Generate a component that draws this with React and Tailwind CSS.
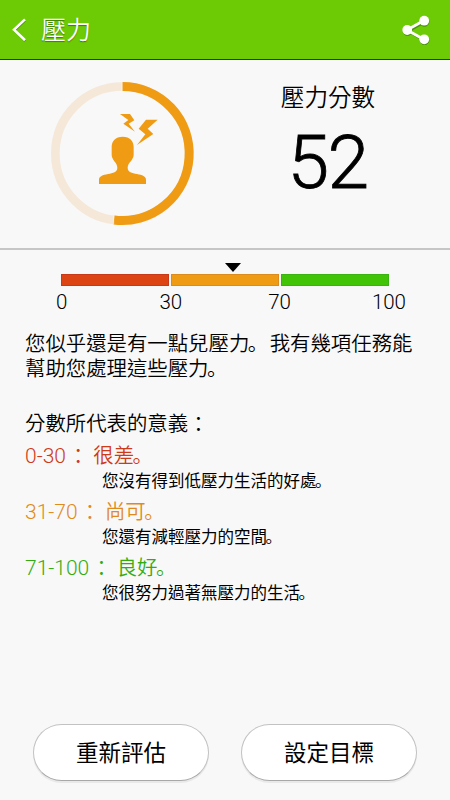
import React from 'react';

const levels = [
    { range: '0-30', label: '很差', text: '您沒有得到低壓力生活的好處', color: 'text-[#cf3a17]' },
    { range: '31-70', label: '尚可', text: '您還有減輕壓力的空間', color: 'text-[#e08a1c]' },
    { range: '71-100', label: '良好', text: '您很努力過著無壓力的生活', color: 'text-[#33ac10]' },
];

// full stop set low and left in its cell
const Stop = () => <span className="inline-block relative -left-[1.500px] leading-none font-['Noto_Sans_CJK_JP',sans-serif]">。</span>;

const Colon = () => <span className="relative top-px">：</span>;

const Header = () => {
    return (
        <header className="h-[60px] shrink-0 bg-[#6ccb05] border-b border-[#24440a] flex items-center justify-between pl-3 pr-5 text-white">
            <div className="flex items-center">
                <svg className="w-[15px] h-6 mr-[14px]" viewBox="0 0 15 24" fill="none">
                    <path d="M13 2.4 2.4 12.6 13 23" stroke="#3f7a08" strokeWidth="2.2" />
                    <path d="M13 1.4 2 11.8 13 22.2" stroke="#fff" strokeWidth="2.6" />
                </svg>
                <h1 className="text-[25px] leading-[30px] pt-[2px] font-[350] [text-shadow:0_1px_1px_#3f7a08]">壓力</h1>
            </div>
            <svg className="w-[28px] h-[30px]" viewBox="0 0 28 30">
                <g fill="#4b920a" stroke="#4b920a" transform="translate(0.3 1)">
                    <path d="M22 6 6 15l16 9.500" fill="none" strokeWidth="2.800" />
                    <circle cx="22.200" cy="5.800" r="4.500" />
                    <circle cx="22.200" cy="24.200" r="4.500" />
                    <circle cx="5.200" cy="15" r="4.500" />
                </g>
                <path d="M22 5.500 5 15l17 9.500" fill="none" stroke="#fff" strokeWidth="2.800" />
                <g fill="#fff">
                    <circle cx="22.200" cy="5.700" r="4.900" />
                    <circle cx="22.200" cy="24.300" r="4.900" />
                    <circle cx="5.200" cy="15" r="4.900" />
                </g>
            </svg>
        </header>
    );
};

const StressRing = () => {
    return (
        <svg className="w-[165px] h-[180px] ml-10 mt-[15px] shrink-0" viewBox="0 0 495 540">
            <circle cx="247" cy="235.500" r="201" fill="none" stroke="#f5e8d9" strokeWidth="26" />
            <path d="M247 34.500A201 201 0 1 1 222 435" fill="none" stroke="#ef9c14" strokeWidth="27" />
            <path d="M246 21v27M221 422v27" stroke="#fff8e8" strokeWidth="2" />
            <g fill="#ef9c14">
                <path d="M248 185c-22 0-33 13-33 31v23c0 16 17 24 17 39 0 13-13 16-28 19-16 3-27 7-27 17v13h141v-13c0-10-11-14-27-17-15-3-28-6-28-19 0-15 18-23 18-39v-23c0-18-11-31-33-31z" />
                <path d="M240 117h30l13 19-17 10 19 24-35-24 15-11z" />
                <path d="M318 134h35l-30 27 17 16-49 33 25-32-20-17z" />
            </g>
        </svg>
    );
};

const Score = () => {
    return (
        <section className="h-[190px] shrink-0 flex items-start border-b-2 border-[#c6c6c6]">
            <StressRing />
            <div className="w-[248px] flex flex-col items-center pt-[23px]">
                <div className="text-[23.600px] leading-[30px] font-[350] pl-px">壓力分數</div>
                <div className="text-[75px] leading-[88px] mt-[5px] font-light tracking-[-1.500px] [-webkit-text-stroke:0.800px_black]">52</div>
            </div>
        </section>
    );
};

const Scale = () => {
    return (
        <section className="shrink-0 pl-[61px] pr-[61px] pt-[13px]">
            <svg className="w-4 h-[9px] ml-[164px]" viewBox="0 0 16 9">
                <path d="M0 0h16L8 9z" />
            </svg>
            <div className="grid grid-cols-3 gap-[2px] mt-[2px] h-3">
                <div className="bg-[#dc4513] border border-[#c83a17]"></div>
                <div className="bg-[#ef9c14] border border-[#dc8c1d]"></div>
                <div className="bg-[#40c405] border border-[#39b310]"></div>
            </div>
            <div className="flex justify-between -ml-[5px] -mr-[17px] mt-[4px] text-[20.500px] leading-6 font-light">
                <span>0</span>
                <span className="ml-[11px]">30</span>
                <span className="ml-[5px]">70</span>
                <span>100</span>
            </div>
        </section>
    );
};

const Level = ({ range, label, text, color }) => {
    return (
        <div className="h-14">
            <div className={`h-8 text-[20.400px] leading-8 font-[350] whitespace-pre ${color}`}>
                <span className="mr-[2px] font-light text-[21px]">{range}</span><Colon /> {label}<Stop />
            </div>
            <div className="ml-[77px] h-5 text-[16.500px] leading-5 whitespace-nowrap">{text}<Stop /></div>
        </div>
    );
};

const Button = ({ children }) => {
    return (
        <button className="w-[176px] h-[57px] rounded-full bg-white border border-[#c2c2c2] border-b-[#a8a8a8] shadow-[0_2px_0_#e9e9e9] text-[22.500px] leading-none pt-[2px]">
            {children}
        </button>
    );
};

const App = () => {
    return (
        <div className="w-[450px] h-[800px] overflow-hidden flex flex-col bg-[#f8f8f8] text-black font-['Roboto','Noto_Sans_CJK_TC',sans-serif]">
            <Header />
            <Score />
            <Scale />
            <main className="flex-1 px-[25px] pt-[18px]">
                <p className="text-[20.400px] leading-[25px] h-[50px] font-[350] whitespace-nowrap">
                    您似乎還是有一點兒壓力<Stop />我有幾項任務能<br />幫助您處理這些壓力<Stop />
                </p>
                <h2 className="text-[20.400px] leading-[30px] h-[30px] mt-[27px] mb-[1px] font-[350]">分數所代表的意義<Colon /></h2>
                {levels.map((level) => (
                    <Level key={level.range} {...level} />
                ))}
            </main>
            <footer className="shrink-0 flex gap-[32px] pl-[33px] pb-[19px]">
                <Button>重新評估</Button>
                <Button>設定目標</Button>
            </footer>
        </div>
    );
};

export default App;
